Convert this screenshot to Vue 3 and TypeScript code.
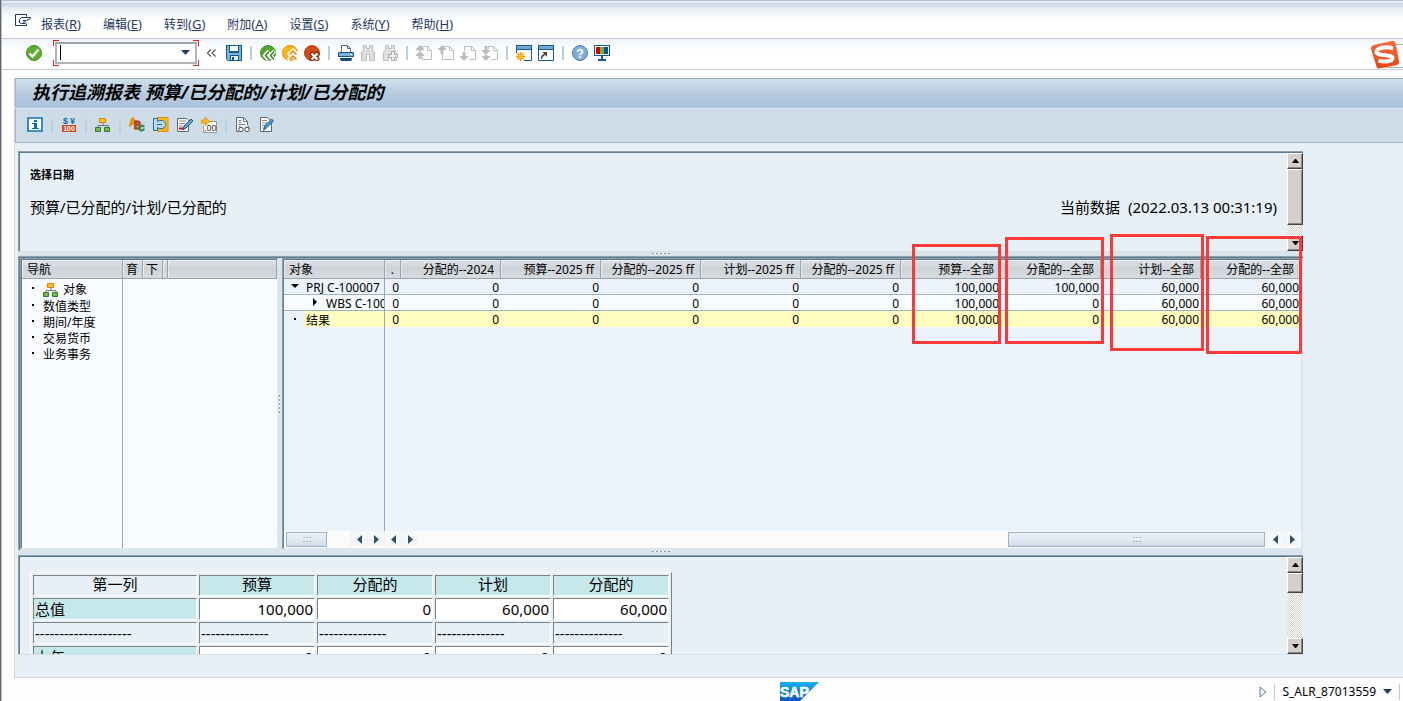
<script setup lang="ts">
interface Tool {
  icon: string
  label: string
  disabled?: boolean
}

interface GridRow {
  marker: 'open' | 'closed' | 'leaf'
  name: string
  total: boolean
  values: string[]
}

const icons: Record<string, string> = {
  exit: '<path d="M11.500 10.500v2H.500v-11h11v2" fill="none" stroke="#1f3a5f"/><path d="M15.500 4.500h-9l-2 2v3l2 1h4M15.500 4.500v1l-4 2H8M11 9H8" fill="none" stroke="#1f3a5f"/>',
  ok: '<circle cx="8" cy="8" r="7.500" fill="#5fae2b" stroke="#3f8a35"/><path d="M3.500 8.500 6.500 11.500 12.500 4.500" fill="none" stroke="#fff" stroke-width="2.400"/>',
  save: '<path d="M0 0h16v16H2L0 14z" fill="#0f5c92"/><path d="M1 1h2v7h10V1h2v14H2l-1-1z" fill="#7fb2d9"/><path d="M3 0h10v7H3z" fill="#0f5c92"/><path d="M4 1h8v5H4z" fill="#fff"/><path d="M4 10h9v6H4z" fill="#0f5c92"/><path d="M5 11h7v4H5z" fill="#e4edf5"/><path d="M6 12h2v3H6z" fill="#0f5c92"/>',
  back: '<circle cx="8" cy="8" r="7.500" fill="#4fa528" stroke="#3f8a35"/><path d="M9 6 5 10.500 9 15M14.500 6l-4 4.500 4 4.500" fill="none" stroke="#fff" stroke-width="4"/><path d="M9 6.500 5.500 10.500 9 14.500M14 6.500 10.500 10.500 14 14.500" fill="none" stroke="#3d7d27" stroke-width="1.500"/>',
  up: '<circle cx="8" cy="8" r="7.500" fill="#fbb614" stroke="#dd8a11"/><path d="M6 10l5-4.500 5 4.500M6 15l5-4.500 5 4.500" fill="none" stroke="#fff" stroke-width="3.600"/><path d="M7.500 9.500 11 6l3.500 3.500M7.500 14.500 11 11l3.500 3.500" fill="none" stroke="#d9801a" stroke-width="1.500"/>',
  cancel: '<circle cx="8" cy="8" r="7.500" fill="#d64a13" stroke="#b83c10"/><path d="M6.500 7.500l8 8M14.500 7.500l-8 8" stroke="#963012" stroke-width="4.600"/><path d="M7.500 8.500l6 6M13.500 8.500l-6 6" stroke="#fff" stroke-width="2.400"/>',
  print: '<path d="M3.500 8V.500h6l3 3V8" fill="#fff" stroke="#666"/><path d="M9.500.500v3h3" fill="none" stroke="#666"/><path d="M1 7h14l1 1v4H0V8z" fill="#0e588b"/><path d="M1 8h14v3H1z" fill="#7fb2d9"/><path d="M12 9h2v1h-2z" fill="#fff"/><path d="M2 13h12v1l-1 2H3l-1-2z" fill="#0b4d7c"/>',
  find: '<path d="M3.500.500h3v3h3v-3h3v4l2 3v8h-5v-6h-3v6h-5v-8l2-3z" fill="#e1e1e1" stroke="#bdbdbd"/><path d="M3 5v9M13 5v9M6.500 6.500h3" stroke="#d0d0d0" fill="none"/>',
  findnext: '<path d="M3.500.500h3v3h3v-3h3v4l2 3v8h-5v-6h-3v6h-5v-8l2-3z" fill="#e1e1e1" stroke="#bdbdbd"/><path d="M9.500 6.500h3v3h3v3h-3v3h-3v-3h-3v-3h3z" fill="#eee" stroke="#aaa"/>',
  first: '<path d="M6.500 3V1.500h5l4 4v9h-9V12" fill="#fff" stroke="#bdbdbd"/><path d="M11.500 1.500v4h4" fill="none" stroke="#bdbdbd"/><path d="M4 0l4 4v1H5.500v1h-3V5H0V4zM4 6l4 4v1H5.500v3h-3v-3H0v-1z" fill="#bdbdbd"/>',
  prev: '<path d="M6.500 3V1.500h5l4 4v9h-11V9" fill="#fff" stroke="#bdbdbd"/><path d="M11.500 1.500v4h4" fill="none" stroke="#bdbdbd"/><path d="M4 0l4 4v1H5.500v4h-3V5H0V4z" fill="#bdbdbd"/>',
  next: '<path d="M4.500 6V1.500h7l4 4v9h-6" fill="#fff" stroke="#bdbdbd"/><path d="M11.500 1.500v4h4" fill="none" stroke="#bdbdbd"/><path d="M4 16l4-4v-1H5.500V7h-3v4H0v1z" fill="#bdbdbd"/>',
  last: '<path d="M6.500 4V1.500h5l4 4v9h-6" fill="#fff" stroke="#bdbdbd"/><path d="M11.500 1.500v4h4" fill="none" stroke="#bdbdbd"/><path d="M4 16l4-4v-1H5.500v-1h-3v1H0v1zM4 10l4-4V5H5.500V1h-3v4H0v1z" fill="#bdbdbd"/>',
  session: '<path d="M.500 8V.500h15v15H8" fill="#fff" stroke="#0f5c92"/><path d="M0 0h16v5H0z" fill="#0f5c92"/><path d="M1 1h14v3H1z" fill="#76a7d2"/><path d="M4.500 7v9M0 11.500h9M1.500 8.500l6 6M7.500 8.500l-6 6" stroke="#e88a00" stroke-width="1.500"/><circle cx="4.500" cy="11.500" r="2.500" fill="#ffc20e"/>',
  shortcut: '<path d="M.500.500h15v15H.500z" fill="#fff" stroke="#0f5c92"/><path d="M0 0h16v5H0z" fill="#0f5c92"/><path d="M1 1h14v3H1z" fill="#76a7d2"/><path d="M3.500 14c0-3 1-4 4-5" fill="none" stroke="#444" stroke-width="1.600"/><path d="M4.500 7H9v5z" fill="#444"/>',
  help: '<circle cx="8" cy="8" r="7.500" fill="#7faedb" stroke="#4a7fae"/><text x="8" y="12.500" font-size="13" font-weight="700" text-anchor="middle" fill="#fff" font-family="Liberation Sans, sans-serif">?</text>',
  monitor: '<path d="M0 0h16v11H0z" fill="#0f5c92"/><path d="M1 1h14v9H1z" fill="#fff"/><path d="M2 2h4v7H2z" fill="#c00"/><path d="M6 2h4v7H6z" fill="#70b62c"/><path d="M10 2h4v7h-4z" fill="#004fb0"/><path d="M7 11h2v3h3v2H4v-2h3z" fill="#0f5c92"/>',
  info: '<path d="M1 1h14v13H1z" fill="#fff" stroke="#0a76b5" stroke-width="1.600"/><path d="M7 3h3v2H7zM5 6h5v5h2v1H5v-1h2V7H5z" fill="#0872b1"/>',
  currency: '<text x="4.500" y="7" font-size="9" font-weight="700" text-anchor="middle" fill="#0d6aa5" font-family="Liberation Sans, sans-serif">$</text><text x="11.500" y="7" font-size="9" font-weight="700" text-anchor="middle" fill="#0d6aa5" font-family="Liberation Sans, sans-serif">¥</text><path d="M1 8h14v7H1z" fill="#ce4516"/><text x="8" y="14" font-size="7" font-weight="700" text-anchor="middle" fill="#fff" font-family="Liberation Sans, sans-serif">100</text>',
  tree: '<path d="M8 5v3M3 11V8.500h10V11" fill="none" stroke="#777"/><path d="M4.500 1.500h6v4h-6z" fill="#ffc61a" stroke="#df7f11"/><path d="M.500 10.500h5v4h-5zM9.500 10.500h5v4h-5z" fill="#7db93a" stroke="#2f7d32"/>',
  abc: '<text x="0" y="9" font-size="11" font-weight="700" fill="#f5a800" stroke="#e38c00" stroke-width=".800" font-family="Liberation Sans, sans-serif">A</text><text x="5" y="12" font-size="10" font-weight="700" fill="#d05224" stroke="#a8380f" stroke-width=".800" font-family="Liberation Sans, sans-serif">B</text><text x="9" y="14" font-size="9" font-weight="700" fill="#3e9e35" stroke="#2d8535" stroke-width=".800" font-family="Liberation Sans, sans-serif">C</text>',
  hook: '<path d="M4 .500h11v14H5v-3h6v-7H7l-3-2z" fill="#fbb614" stroke="#d99012"/><path d="M.500 1.500h4v3l2-1h3c4 2 4 6 0 8h-3l-2-1v3h-4z" fill="#bcd9ef" stroke="#1e70ac"/><path d="M4 7.500h5" stroke="#1e70ac"/>',
  edit: '<path d="M.500 1.500h9l2 2v11H.500z" fill="#fff" stroke="#666"/><path d="M2 4h7M2 6.500h6M2 9h4" stroke="#888"/><path d="M2 11.500h4" stroke="#d00" stroke-width="2"/><path d="M6 13l1-4 7-7 2 2-7 7z" fill="#62a0ce" stroke="#235a86"/>',
  decimals: '<path d="M7 4.500h8.500v11h-13V9" fill="#fff" stroke="#999"/><text x="3" y="14" font-size="9" fill="#333" font-family="Liberation Sans, sans-serif">,00</text><path d="M0 3h4V0l5 4.500L4 9V6H0z" fill="#fdb813" stroke="#da8d12" stroke-width=".700"/>',
  view: '<path d="M1.500 14V.500h7l4 4V8M1.500 14.500H4" fill="#fff" stroke="#666"/><path d="M8.500.500v4h4M3.500 3.500h3M3.500 5.500h3M3.500 7.500h7" fill="none" stroke="#777"/><path d="M5 9l-1 3M13 9l1.500 3" stroke="#555"/><circle cx="6" cy="12.500" r="2.200" fill="#fff" stroke="#555"/><circle cx="12" cy="12.500" r="2.200" fill="#fff" stroke="#555"/>',
  change: '<path d="M1.500.500h7l4 4v10h-11z" fill="#fff" stroke="#666"/><path d="M3 3.500h5M3 6h5M3 8.500h4M3 11h2" stroke="#888"/><path d="M4.500 13.500l1.500-5 6.500-6.500 2 2L8 10.500z" fill="#4f98cc" stroke="#1d5c8e"/>',
}

const menus = [
  { text: '报表', key: 'R' },
  { text: '编辑', key: 'E' },
  { text: '转到', key: 'G' },
  { text: '附加', key: 'A' },
  { text: '设置', key: 'S' },
  { text: '系统', key: 'Y' },
  { text: '帮助', key: 'H' },
]

const systemTools: Tool[][] = [
  [
    { icon: 'back', label: '返回' },
    { icon: 'up', label: '退出' },
    { icon: 'cancel', label: '取消' },
  ],
  [
    { icon: 'print', label: '打印' },
    { icon: 'find', label: '查找', disabled: true },
    { icon: 'findnext', label: '继续查找', disabled: true },
  ],
  [
    { icon: 'first', label: '第一页', disabled: true },
    { icon: 'prev', label: '上一页', disabled: true },
    { icon: 'next', label: '下一页', disabled: true },
    { icon: 'last', label: '最后一页', disabled: true },
  ],
  [
    { icon: 'session', label: '新建会话' },
    { icon: 'shortcut', label: '创建快捷方式' },
  ],
  [
    { icon: 'help', label: '帮助' },
    { icon: 'monitor', label: '定制本地布局' },
  ],
]

const reportTools: Tool[][] = [
  [{ icon: 'info', label: '信息' }],
  [{ icon: 'currency', label: '货币' }],
  [{ icon: 'tree', label: '层次' }],
  [
    { icon: 'abc', label: '文本' },
    { icon: 'hook', label: '导航' },
    { icon: 'edit', label: '编辑' },
    { icon: 'decimals', label: '数字格式' },
  ],
  [
    { icon: 'view', label: '显示' },
    { icon: 'change', label: '更改' },
  ],
]

const navItems = ['对象', '数值类型', '期间/年度', '交易货币', '业务事务']

const columns = [
  '分配的--2024',
  '预算--2025 ff',
  '分配的--2025 ff',
  '计划--2025 ff',
  '分配的--2025 ff',
  '预算--全部',
  '分配的--全部',
  '计划--全部',
  '分配的--全部',
]

const rows: GridRow[] = [
  { marker: 'open', name: 'PRJ C-100007', total: false, values: ['0', '0', '0', '0', '0', '0', '100,000', '100,000', '60,000', '60,000'] },
  { marker: 'closed', name: 'WBS C-100', total: false, values: ['0', '0', '0', '0', '0', '0', '100,000', '0', '60,000', '60,000'] },
  { marker: 'leaf', name: '结果', total: true, values: ['0', '0', '0', '0', '0', '0', '100,000', '0', '60,000', '60,000'] },
]

const detailHead = ['第一列', '预算', '分配的', '计划', '分配的']
const dashes = '-'.repeat(14)
const detailRows = [
  { name: '总值', rule: false, values: ['100,000', '0', '60,000', '60,000'] },
  { name: '-'.repeat(20), rule: true, values: [dashes, dashes, dashes, dashes] },
  { name: '上年', rule: false, values: ['0', '0', '0', '0'] },
]
</script>

<template>
  <div class="window">
    <div class="strip"></div>
    <nav class="menubar">
      <button class="tool" type="button" aria-label="菜单">
        <svg class="icon" viewBox="0 0 16 16" v-html="icons.exit"></svg>
      </button>
      <div class="menus">
        <button v-for="m in menus" :key="m.key" class="menu" type="button">{{ m.text }}<span class="key">(<u>{{ m.key }}</u>)</span></button>
      </div>
    </nav>

    <div class="toolbar">
      <button class="tool" type="button" aria-label="确认">
        <svg class="icon" viewBox="0 0 16 16" v-html="icons.ok"></svg>
      </button>
      <div class="command">
        <input class="command-input" type="text" aria-label="命令" />
        <span class="caret"></span>
        <svg class="command-arrow" viewBox="0 0 9 5"><path d="M0 0h9L4.500 5z" fill="#20396b" /></svg>
      </div>
      <button class="tool collapse" type="button" aria-label="收起">
        <svg class="icon" viewBox="0 0 16 16"><path d="M8 4.500 4.500 8 8 11.500M12.500 4.500 9 8l3.500 3.500" fill="none" stroke="#555" stroke-width="1.200" /></svg>
      </button>
      <button class="tool" type="button" aria-label="保存">
        <svg class="icon" viewBox="0 0 16 16" v-html="icons.save"></svg>
      </button>
      <template v-for="(group, g) in systemTools" :key="g">
        <span class="sep"></span>
        <button v-for="t in group" :key="t.icon" class="tool" type="button" :aria-label="t.label" :disabled="t.disabled">
          <svg class="icon" viewBox="0 0 16 16" v-html="icons[t.icon]"></svg>
        </button>
      </template>
      <div class="ime">
        <span class="ime-bar"></span>
        <svg class="ime-logo" viewBox="0 0 28 28">
          <defs>
            <linearGradient id="ime-fill" x1="0" y1="0" x2="0" y2="1">
              <stop offset="0" stop-color="#f56a3c" />
              <stop offset="1" stop-color="#ee4410" />
            </linearGradient>
          </defs>
          <path d="M3 4 21 0q3-.500 3.500 2L28 20q.500 3-2 4L8 27.500q-2 .500-2.500-2L0 8q-.500-3 3-4z" fill="url(#ime-fill)" />
          <path d="M22 7.500C15 5 5.500 7 5.500 11c0 4.500 16 2 16 6 0 3.500-8 4.500-14 2.500" fill="none" stroke="#fff" stroke-width="4" />
        </svg>
      </div>
    </div>

    <main class="shell">
      <h1 class="title">执行追溯报表 预算/已分配的/计划/已分配的</h1>
      <div class="report-tools">
        <template v-for="(group, g) in reportTools" :key="g">
          <span v-if="g > 0" class="sep"></span>
          <button v-for="t in group" :key="t.icon" class="tool" type="button" :aria-label="t.label">
            <svg class="icon" viewBox="0 0 16 16" v-html="icons[t.icon]"></svg>
          </button>
        </template>
      </div>

      <div class="work">
        <section class="sunken">
          <div class="summary">
            <h2 class="summary-title">选择日期</h2>
            <div class="summary-line">
              <span>预算/已分配的/计划/已分配的</span>
              <span class="stamp">当前数据&nbsp; (2022.03.13 00:31:19)</span>
            </div>
          </div>
          <div class="vbar">
            <button class="vbtn" type="button" aria-label="向上"><svg viewBox="0 0 7 4" class="varrow"><path d="M3 0h1l3 4H0z" /></svg></button>
            <span class="vthumb long"></span>
            <span class="vtrack"></span>
            <button class="vbtn" type="button" aria-label="向下"><svg viewBox="0 0 7 4" class="varrow"><path d="M0 0h7L4 4H3z" /></svg></button>
          </div>
        </section>

        <div class="hsplit"><span class="hgrip"></span></div>

        <section class="middle">
          <div class="pane nav-pane">
            <table class="nav-table">
              <colgroup><col class="c-name" /><col class="c-flag" /><col class="c-flag" /><col class="c-gap" /><col /></colgroup>
              <thead>
                <tr><th scope="col">导航</th><th scope="col" class="flag">育</th><th scope="col" class="flag">下</th><th></th><th></th></tr>
              </thead>
              <tbody>
                <tr v-for="(item, i) in navItems" :key="item">
                  <td :class="{ first: i === 0 }" colspan="5">
                    <div class="nav-item">
                      <span class="dot"></span>
                      <svg v-if="i === 0" class="icon" viewBox="0 0 16 16" v-html="icons.tree"></svg>
                      <span>{{ item }}</span>
                    </div>
                  </td>
                </tr>
              </tbody>
            </table>
          </div>
          <div class="vsplit"><span class="vgrip"></span></div>
          <div class="pane grid-pane">
            <div class="grid-area">
              <table class="grid">
                <colgroup><col class="g-name" /><col class="g-small" /><col v-for="(c, i) in columns" :key="i" /></colgroup>
                <thead>
                  <tr>
                    <th scope="col" class="left">对象</th>
                    <th scope="col">.</th>
                    <th v-for="(c, i) in columns" :key="i" scope="col">{{ c }}</th>
                  </tr>
                </thead>
                <tbody>
                  <tr v-for="r in rows" :key="r.name" :class="[r.marker, { total: r.total }]">
                    <td class="name">
                      <div class="node">
                        <span class="marker">
                          <svg v-if="r.marker === 'open'" class="m-open" viewBox="0 0 8 4"><path d="M0 0h8L4 4z" /></svg>
                          <svg v-else-if="r.marker === 'closed'" class="m-closed" viewBox="0 0 4 8"><path d="M0 0v8l4-4z" /></svg>
                          <span v-else class="dot"></span>
                        </span>
                        <span>{{ r.name }}</span>
                      </div>
                    </td>
                    <td v-for="(v, i) in r.values" :key="i">{{ v }}</td>
                  </tr>
                </tbody>
              </table>
            </div>
            <div class="hbars">
              <div class="hbar fixed">
                <span class="hthumb short"><i class="ridge"></i></span>
                <span class="htrack"></span>
                <button class="hbtn" type="button" aria-label="向左"><svg viewBox="0 0 5 9" class="harrow"><path d="M5 0v9L0 4.500z" /></svg></button>
                <button class="hbtn" type="button" aria-label="向右"><svg viewBox="0 0 5 9" class="harrow"><path d="M0 0v9l5-4.500z" /></svg></button>
              </div>
              <div class="hbar">
                <button class="hbtn" type="button" aria-label="向左"><svg viewBox="0 0 5 9" class="harrow"><path d="M5 0v9L0 4.500z" /></svg></button>
                <button class="hbtn" type="button" aria-label="向右"><svg viewBox="0 0 5 9" class="harrow"><path d="M0 0v9l5-4.500z" /></svg></button>
                <span class="htrack"></span>
                <span class="hthumb wide"><i class="ridge"></i></span>
                <button class="hbtn" type="button" aria-label="向左"><svg viewBox="0 0 5 9" class="harrow"><path d="M5 0v9L0 4.500z" /></svg></button>
                <button class="hbtn" type="button" aria-label="向右"><svg viewBox="0 0 5 9" class="harrow"><path d="M0 0v9l5-4.500z" /></svg></button>
              </div>
            </div>
          </div>
        </section>

        <div class="hsplit tall"><span class="hgrip"></span></div>

        <section class="sunken lower">
          <div class="detail-pane">
            <table class="detail">
              <thead>
                <tr><th v-for="(h, i) in detailHead" :key="i" scope="col">{{ h }}</th></tr>
              </thead>
              <tbody>
                <tr v-for="d in detailRows" :key="d.name" :class="{ rule: d.rule }">
                  <th scope="row">{{ d.name }}</th>
                  <td v-for="(v, i) in d.values" :key="i">{{ v }}</td>
                </tr>
              </tbody>
            </table>
          </div>
          <div class="vbar">
            <button class="vbtn" type="button" aria-label="向上"><svg viewBox="0 0 7 4" class="varrow"><path d="M3 0h1l3 4H0z" /></svg></button>
            <span class="vthumb"></span>
            <span class="vtrack"></span>
            <button class="vbtn" type="button" aria-label="向下"><svg viewBox="0 0 7 4" class="varrow"><path d="M0 0h7L4 4H3z" /></svg></button>
          </div>
        </section>

        <span class="mark mark-a"></span>
        <span class="mark mark-b"></span>
        <span class="mark mark-c"></span>
        <span class="mark mark-d"></span>
      </div>
    </main>

    <footer class="status">
      <span></span>
      <svg class="sap" viewBox="0 0 39 19">
        <defs>
          <linearGradient id="sap-fill" x1="0" y1="0" x2="0" y2="1">
            <stop offset="0" stop-color="#0fb1ee" />
            <stop offset="1" stop-color="#1456b8" />
          </linearGradient>
        </defs>
        <path d="M0 0h39L20 19H0z" fill="url(#sap-fill)" />
        <text x="0" y="15" font-size="14" font-weight="700" fill="#fff" stroke="#fff" stroke-width=".600" font-family="Liberation Sans, sans-serif">SAP</text>
      </svg>
      <div class="status-right">
        <svg class="play" viewBox="0 0 8 12"><path d="M1 1v10l6-5z" fill="#eef4fa" stroke="#5b7f9f" /></svg>
        <span class="tick"></span>
        <span>S_ALR_87013559</span>
        <svg class="drop" viewBox="0 0 9 5"><path d="M0 0h9L4.500 5z" fill="#20396b" /></svg>
        <span class="tick"></span>
      </div>
    </footer>
  </div>
</template>

<style>
body {
  margin: 0;
}
</style>

<style scoped>
.window {
  box-sizing: border-box;
  display: flex;
  flex-direction: column;
  min-height: 100vh;
  border-left: 1px solid #666;
  box-shadow: inset 1px 0 #b9bcc2;
  padding-left: 1px;
  background: #fdfdfe;
  color: #000;
  font-family: "Noto Sans", "Noto Sans CJK SC", sans-serif;
  font-size: 12px;
  line-height: 16px;
}

button {
  margin: 0;
  padding: 0;
  border: 0;
  background: none;
  font: inherit;
  color: inherit;
}

svg {
  display: block;
}

.icon {
  width: 16px;
  height: 16px;
  flex: none;
}

.strip {
  height: 3px;
  border-top: 1px solid #b3c1d1;
  box-sizing: border-box;
  background: #e6ecf3;
}

.menubar {
  display: flex;
  align-items: center;
  height: 35px;
  padding: 0 13px;
  border-bottom: 1px solid #c5cbd6;
  background: linear-gradient(#c8d5e4, #edf2f7 7px, #fff 18px, #fff);
}

.menus {
  display: flex;
  gap: 22px;
  margin-left: 10px;
  padding-top: 8px;
}

.menu {
  color: #1f3864;
  white-space: nowrap;
}

.key {
  font-size: 13px;
}

.toolbar {
  position: relative;
  display: flex;
  align-items: center;
  gap: 6px;
  height: 28px;
  padding: 0 24px 2px;
  border-bottom: 1px solid #c8ccd6;
  background: linear-gradient(#f0f4f9, #fff 12px, #fff);
}

.sep {
  width: 2px;
  height: 14px;
  background: #bad0e4;
}

.toolbar .sep {
  margin: 0 2px;
}

.command {
  position: relative;
  width: 146px;
  height: 26px;
  margin-left: 5px;
  padding: 2px;
  box-sizing: border-box;
  background:
    linear-gradient(#d22 0 0) 0 0 / 6px 1px,
    linear-gradient(#d22 0 0) 0 0 / 1px 6px,
    linear-gradient(#d22 0 0) 100% 0 / 6px 1px,
    linear-gradient(#d22 0 0) 100% 0 / 1px 6px,
    linear-gradient(#d22 0 0) 0 100% / 6px 1px,
    linear-gradient(#d22 0 0) 0 100% / 1px 6px,
    linear-gradient(#d22 0 0) 100% 100% / 6px 1px,
    linear-gradient(#d22 0 0) 100% 100% / 1px 6px;
  background-repeat: no-repeat;
}

.command-input {
  box-sizing: border-box;
  width: 100%;
  height: 22px;
  padding: 0 20px 0 4px;
  border: 2px solid #b0b4b9;
  border-top-color: #9da3ab;
  background: #fff;
  font: inherit;
  outline: none;
}

.caret {
  position: absolute;
  left: 7px;
  top: 5px;
  width: 1px;
  height: 15px;
  background: #000;
}

.command-arrow {
  position: absolute;
  right: 9px;
  top: 10px;
  width: 9px;
  height: 5px;
}

.collapse {
  margin: 0 1px 0 -2px;
}

.ime {
  position: absolute;
  right: 0;
  top: 1px;
  width: 32px;
  height: 29px;
}

.ime-bar {
  position: absolute;
  inset: 4px 0 1px 14px;
  border: 1px solid #adb0b5;
  border-right: 0;
  background: #fff;
}

.ime-logo {
  position: absolute;
  left: 0;
  top: 1px;
  width: 28px;
  height: 28px;
}

.shell {
  flex: 1;
  display: flex;
  flex-direction: column;
  margin: 8px 0 0 12px;
  border-left: 1px solid #cdd5e2;
  border-bottom: 1px solid #cdd4e0;
  background: #e8f0f7;
}

.title {
  margin: 0;
  height: 29px;
  padding-left: 17px;
  border-top: 1px solid #94a8c0;
  border-bottom: 1px solid #deeaf4;
  box-shadow: inset 1px 0 #a3b7cb;
  background: linear-gradient(#cfdfeb, #b4c9de 60%, #adc3dc);
  font-size: 18px;
  line-height: 26px;
  font-weight: 700;
  font-style: italic;
  white-space: nowrap;
}

.report-tools {
  display: flex;
  align-items: center;
  gap: 8px;
  height: 33px;
  padding-left: 12px;
  border-bottom: 1px solid #a4b5c5;
  box-shadow: inset 1px 0 #a3b7cb;
  background: #cedce7;
}

.report-tools .icon {
  margin-bottom: 1px;
}

.work {
  position: relative;
  flex: 1;
  display: flex;
  flex-direction: column;
  padding: 8px 100px 22px 3px;
}

.sunken {
  display: flex;
  border-top: 1px solid #8fa1ae;
  border-left: 1px solid #8fa1ae;
  border-bottom: 1px solid #d5dfe8;
  box-shadow: inset 1px 1px #5f7c8c;
  padding: 1px 0 0 1px;
}

.summary {
  flex: 1;
  padding: 14px 10px 34px;
}

.summary-title {
  margin: 0;
  font-size: 11px;
  line-height: 16px;
  font-weight: 700;
}

.summary-line {
  display: flex;
  justify-content: space-between;
  margin-top: 14px;
  font-size: 15px;
  line-height: 20px;
  white-space: nowrap;
}

.vbar {
  display: flex;
  flex-direction: column;
  width: 16px;
}

.vbtn,
.vthumb {
  box-sizing: border-box;
  height: 16px;
  border: 1px solid #fff;
  border-right-color: #444;
  border-bottom-color: #444;
  box-shadow: inset -1px -1px #8a8783;
  background: #d5d1ca;
}

.vbtn {
  display: flex;
  align-items: center;
  justify-content: center;
}

.vthumb {
  height: 20px;
}

.vthumb.long {
  height: 56px;
}

.varrow {
  width: 7px;
  height: 4px;
}

.vtrack {
  flex: 1;
  background: repeating-conic-gradient(#d2cfc9 0 25%, #fff 0 50%) 0 0 / 2px 2px;
}

.hsplit {
  display: flex;
  justify-content: center;
  height: 4px;
  background: #dae4ed;
}

.hsplit.tall {
  height: 5px;
}

.hgrip {
  width: 18px;
  height: 1px;
  margin-top: 1px;
  background: repeating-linear-gradient(90deg, #8696a5 0 2px, #f5f9fc 2px 4px);
}

.middle {
  flex: 1;
  display: flex;
  border-top: 1px solid #8fa1ae;
  border-left: 1px solid #8fa1ae;
  box-shadow: inset 1px 1px #5f7c8c;
  padding: 1px 0 0 1px;
}

.pane {
  box-sizing: border-box;
  display: flex;
  flex-direction: column;
  border: 2px solid #dce6ee;
  border-top: 1px solid #8fa1ae;
  border-left: 1px solid #8fa1ae;
  box-shadow: inset 1px 1px #5f7c8c;
  padding: 1px 0 0 1px;
}

.nav-pane {
  width: 259px;
  background: linear-gradient(#98a6b6 0 0) 101px 0 / 1px 100% no-repeat, #f8fbff;
}

.nav-table,
.grid {
  width: 100%;
  table-layout: fixed;
  border-spacing: 0;
}

.c-name {
  width: 101px;
}

.c-flag {
  width: 20px;
}

.c-gap {
  width: 5px;
}

.nav-table th,
.grid th {
  box-sizing: border-box;
  height: 19px;
  padding: 2px 0 0 5px;
  border-right: 1px solid #98a4ae;
  border-bottom: 1px solid #98a4ae;
  box-shadow: inset 1px 1px #e8edf1;
  background: linear-gradient(#dde2e6, #ced3d9 50%, #d7dce0);
  font-weight: 400;
  line-height: 16px;
  text-align: left;
  white-space: nowrap;
  overflow: hidden;
}

.nav-table .flag {
  padding-left: 3px;
}

.nav-table td {
  padding: 0;
  height: 16px;
}

.nav-table td.first {
  height: 19px;
}

.nav-item {
  display: flex;
  align-items: center;
  gap: 4px;
  padding: 2px 0 0 10px;
  line-height: 14px;
}

.nav-item .dot {
  margin: 0 5px 4px 0;
}

.dot {
  width: 2px;
  height: 2px;
  background: #000;
  flex: none;
}

.vsplit {
  display: flex;
  align-items: center;
  width: 3px;
  background: #dae4ed;
}

.vgrip {
  width: 1px;
  height: 18px;
  background: repeating-linear-gradient(#8696a5 0 2px, #f5f9fc 2px 4px);
}

.grid-pane {
  flex: 1;
  min-width: 0;
  background: #ecf3fc;
}

.grid-area {
  flex: 1;
  background: linear-gradient(#98a6b6 0 0) 100px 0 / 1px 100% no-repeat;
}

.g-name {
  width: 101px;
}

.g-small {
  width: 16px;
}

.grid th {
  padding-left: 0;
  padding-right: 6px;
  text-align: right;
}

.grid th.left {
  padding-left: 5px;
  text-align: left;
}

.grid td {
  box-sizing: border-box;
  height: 16px;
  padding: 2px 2px 0 0;
  border-bottom: 1px solid #a2b3c7;
  line-height: 13px;
  text-align: right;
}

.grid .closed td {
  background: #f8fbff;
}

.grid .total td {
  border-bottom-color: #fffdbf;
  background: #fffdbf;
}

.grid td.name {
  padding: 2px 0 0;
  border-right: 1px solid #98a6b6;
  text-align: left;
  overflow: hidden;
}

.grid .total td.name {
  background: linear-gradient(#fffdbf 0 0) 20px 0 / 100% 100% no-repeat, #ecf3fc;
  border-bottom: 0;
}

.node {
  display: flex;
  align-items: center;
  height: 13px;
  white-space: nowrap;
}

.closed .node {
  padding-left: 20px;
}

.marker {
  display: flex;
  justify-content: center;
  width: 22px;
  padding-bottom: 3px;
  flex: none;
}

.m-open {
  width: 8px;
  height: 4px;
}

.m-closed {
  width: 4px;
  height: 8px;
}

.hbars {
  display: flex;
  height: 17px;
}

.hbar {
  flex: 1;
  display: flex;
  padding-right: 1px;
  background: #fbfbfb;
}

.hbar.fixed {
  flex: none;
  width: 99px;
  padding: 0 0 0 1px;
}

.hbtn {
  display: flex;
  align-items: center;
  justify-content: center;
  width: 17px;
  height: 16px;
  border-left: 1px solid #edf1f5;
  background: #f5f8fb;
}

.harrow {
  width: 5px;
  height: 9px;
  fill: #35506a;
}

.htrack {
  flex: 1;
}

.hthumb {
  box-sizing: border-box;
  display: flex;
  align-items: center;
  justify-content: center;
  height: 15px;
  margin: 1px 1px 0;
  border: 1px solid #9fb2c4;
  background: linear-gradient(#eaf1f7, #dfe9f2 60%, #ccdbe8);
}

.hthumb.short {
  width: 41px;
}

.hthumb.wide {
  width: 257px;
}

.ridge {
  width: 8px;
  height: 5px;
  background: repeating-linear-gradient(#a9b9c8 0 1px, #f4f8fb 1px 2px, transparent 2px 4px);
  mask: repeating-linear-gradient(90deg, #000 0 2px, transparent 2px 3px);
}

.lower {
  height: 97px;
}

.detail-pane {
  flex: 1;
  padding: 15px 10px 0;
  overflow: hidden;
}

.detail {
  width: 642px;
  table-layout: fixed;
  border-collapse: separate;
  border-spacing: 2px;
  border: 1px solid #fff;
  border-right-color: #808080;
  font-size: 15px;
}

.detail th,
.detail td {
  box-sizing: border-box;
  height: 22px;
  padding: 0 1px;
  border: 1px solid #fff;
  border-top-color: #808080;
  border-left-color: #808080;
  background: #fff;
  font-weight: 400;
  line-height: 20px;
  text-align: right;
  white-space: nowrap;
}

.detail th {
  background: #c5e9eb;
  line-height: 18px;
  text-align: left;
}

.detail thead th {
  height: 21px;
  line-height: 17px;
  padding-bottom: 2px;
  text-align: center;
}

.detail thead th:first-child {
  width: 164px;
  background: #e8f0f7;
}

.detail .rule th,
.detail .rule td {
  background: #e8f0f7;
  text-align: left;
}

.mark {
  position: absolute;
  box-sizing: border-box;
  border: 3px solid #fb3939;
  pointer-events: none;
}

.mark-a {
  top: 101px;
  right: 402px;
  width: 89px;
  height: 100px;
}

.mark-b {
  top: 94px;
  right: 299px;
  width: 99px;
  height: 107px;
}

.mark-c {
  top: 91px;
  right: 199px;
  width: 94px;
  height: 117px;
}

.mark-d {
  top: 93px;
  right: 101px;
  width: 96px;
  height: 118px;
}

.status {
  display: grid;
  grid-template-columns: 4fr 39px 3fr;
  align-items: center;
  height: 23px;
  padding-top: 4px;
  box-sizing: border-box;
}

.sap {
  width: 39px;
  height: 19px;
}

.status-right {
  display: flex;
  align-items: center;
  justify-content: flex-end;
  gap: 7px;
  padding-right: 3px;
}

.play {
  width: 8px;
  height: 12px;
}

.drop {
  width: 9px;
  height: 5px;
}

.tick {
  width: 1px;
  height: 16px;
  background: #c8c8c8;
}
</style>
